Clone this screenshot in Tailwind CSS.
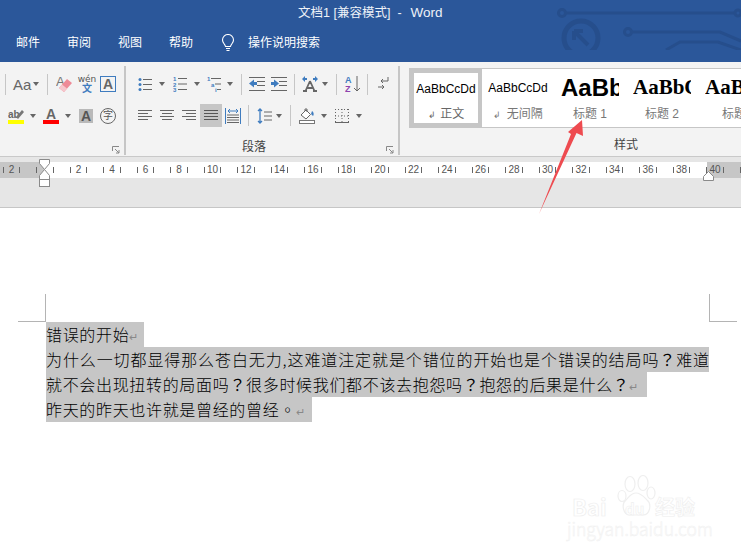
<!DOCTYPE html>
<html>
<head>
<meta charset="utf-8">
<script src="https://cdn.jsdelivr.net/npm/@tailwindcss/browser@4"></script>
</head>
<body class="m-0 bg-white">
<div class="relative w-[741px] h-[556px] overflow-hidden bg-white font-['Liberation_Sans','Noto_Sans_CJK_SC',sans-serif]">

  <!-- title bar + tabs -->
  <div class="relative h-[62px] bg-[#2b579a] text-white">
    <svg class="absolute left-[540px] top-0" width="201" height="50" viewBox="540 0 201 50" fill="none" stroke="#264e8c" stroke-width="3">
      <circle cx="562" cy="13" r="3.5"/><path d="M566 13H734"/><circle cx="738" cy="13" r="3"/>
      <circle cx="581" cy="38" r="17" stroke-width="5"/><path d="M574 31l14 14M574 31h9M574 31v9" stroke-width="4"/>
      <circle cx="628" cy="32" r="3.5"/><path d="M632 32H720L741 41"/><path d="M666 50L680 42H718L741 50"/>
    </svg>
    <div class="relative flex h-[27px] pl-[298px] items-center text-[12.5px] text-[#eef2f8] whitespace-nowrap">
      <span>文档1 [兼容模式]</span><span class="ml-[7px]">-</span><span class="ml-[9px] text-[13.5px]">Word</span>
    </div>
    <div class="relative flex items-center h-[35px] pl-[16px] pb-[3px] text-[12px]">
      <span class="w-[51px]">邮件</span>
      <span class="w-[51px]">审阅</span>
      <span class="w-[51px]">视图</span>
      <span class="w-[52px]">帮助</span>
      <svg width="14" height="18" viewBox="0 0 14 18" fill="none" stroke="#fff" stroke-width="1.1"><path d="M4.5 12.5C4 10 1.5 9 1.5 6a5.5 5.5 0 0 1 11 0c0 3-2.500 4-3 6.500z"/><path d="M5 14.500h4M5.500 16.500h3"/></svg>
      <span class="ml-[13px]">操作说明搜索</span>
    </div>
  </div>

  <!-- ribbon -->
  <div class="flex h-[95px] bg-[#f3f3f3] border-b border-[#c9c9c9] text-[#666]">

    <!-- font group -->
    <div class="relative w-[126px] shrink-0 border-r-2 border-[#c6c6c6] mb-[1px] mt-[4px] pt-[7px]">
      <div class="flex items-center h-[22px]">
        <span class="ml-[5px] w-px h-[21px] bg-[#c6c6c6]"></span>
        <span class="ml-[7px] w-[16px] text-[15px] leading-none text-[#666]">Aa</span>
        <span class="ml-[4px] border-x-[3px] border-t-[4px] border-x-transparent border-t-[#666]"></span>
        <span class="ml-[8px] w-px h-[21px] bg-[#c6c6c6]"></span>
        <svg class="ml-[8px]" width="16" height="18" viewBox="0 0 16 18"><text x="0" y="11" font-size="13" fill="#777" font-family="Liberation Sans">A</text><path d="M3 13l8-9 5 4-8 9z" fill="#ee8a97"/><path d="M3 13l3-3.500 5 4-3 3.500z" fill="#f6c6cc"/></svg>
        <div class="ml-[7px] w-[16px] flex flex-col items-center leading-none">
          <span class="text-[9px] text-[#555] font-['DejaVu_Sans'] leading-[9px]">wén</span>
          <span class="text-[10px] text-[#3f7cbf] font-bold leading-[10px]">文</span>
        </div>
        <span class="ml-[5px] w-[16px] h-[16px] border border-[#3f7cbf] flex items-center justify-center text-[14px] font-bold leading-none text-[#666]">A</span>
      </div>
      <div class="flex items-center h-[23px] mt-[9px]">
        <svg class="ml-[8px]" width="16" height="16" viewBox="0 0 16 16"><text x="0" y="10" font-size="10" fill="#666" font-family="Liberation Sans" font-weight="bold">ab</text><path d="M8 9l6-7 2 2-6 7z" fill="#777"/><rect y="12" width="16" height="4" fill="#ffff00"/></svg>
        <span class="ml-[6px] border-x-[3px] border-t-[4px] border-x-transparent border-t-[#666]"></span>
        <div class="ml-[7px] w-[16px] flex flex-col items-center">
          <span class="text-[14px] leading-[12px] font-bold text-[#666]">A</span>
          <span class="w-[16px] h-[4px] bg-[#ff0000]"></span>
        </div>
        <span class="ml-[6px] border-x-[3px] border-t-[4px] border-x-transparent border-t-[#666]"></span>
        <span class="ml-[8px] w-[14px] h-[14px] bg-[#b9b9b9] flex items-center justify-center text-[14px] font-bold leading-none text-[#555]">A</span>
        <span class="ml-[7px] w-[16px] h-[16px] rounded-full border border-[#666] flex items-center justify-center text-[10px] leading-none text-[#555]">字</span>
      </div>
      <svg class="absolute right-[4px] bottom-[1px]" width="8" height="8" viewBox="0 0 8 8" fill="none" stroke="#888"><path d="M.5 5V.5H7"/><path d="M3 3l4 4M7 4v3H4"/></svg>
    </div>

    <!-- paragraph group -->
    <div class="relative w-[274px] shrink-0 border-r-2 border-[#c6c6c6] mb-[1px] mt-[4px] pt-[7px]">
      <div class="flex items-center h-[22px]">
        <svg class="ml-[12px]" width="14" height="15" viewBox="0 0 14 15" stroke="#666"><path d="M5 2.500h9M5 7.500h9M5 12.500h9"/><circle cx="2" cy="2.500" r="1.500" fill="#3f7cbf" stroke="none"/><circle cx="2" cy="7.500" r="1.500" fill="#3f7cbf" stroke="none"/><circle cx="2" cy="12.500" r="1.500" fill="#3f7cbf" stroke="none"/></svg>
        <span class="ml-[7px] border-x-[3px] border-t-[4px] border-x-transparent border-t-[#666]"></span>
        <svg class="ml-[8px]" width="14" height="16" viewBox="0 0 14 16" stroke="#666"><path d="M5 2.500h9M5 8h9M5 13.500h9"/><g fill="#3f7cbf" stroke="none" font-size="6" font-family="Liberation Sans" font-weight="bold"><text x="0" y="5">1</text><text x="0" y="10.500">2</text><text x="0" y="16">3</text></g></svg>
        <span class="ml-[7px] border-x-[3px] border-t-[4px] border-x-transparent border-t-[#666]"></span>
        <svg class="ml-[7px]" width="15" height="16" viewBox="0 0 15 16" stroke="#666"><path d="M4 2.500h10M8 8h6M10 13.500h4"/><g fill="#3f7cbf" stroke="none" font-size="6" font-family="Liberation Sans" font-weight="bold"><text x="0" y="5">1</text><text x="4" y="10.500">a</text><text x="8" y="16">i</text></g></svg>
        <span class="ml-[5px] border-x-[3px] border-t-[4px] border-x-transparent border-t-[#666]"></span>
        <span class="ml-[8px] w-px h-[21px] bg-[#c6c6c6]"></span>
        <svg class="ml-[7px]" width="16" height="14" viewBox="0 0 16 14" stroke="#666"><path d="M0 .5h16M8 4.500h8M8 8.500h8M0 13.500h16"/><path d="M0 6.500l5-4v2.500h3v3H5v2.500z" fill="#3f7cbf" stroke="none"/></svg>
        <svg class="ml-[6px]" width="16" height="14" viewBox="0 0 16 14" stroke="#666"><path d="M0 .5h16M8 4.500h8M8 8.500h8M0 13.500h16"/><path d="M8 6.500l-5-4v2.500H0v3h3v2.500z" fill="#3f7cbf" stroke="none"/></svg>
        <span class="ml-[7px] w-px h-[21px] bg-[#c6c6c6]"></span>
        <svg class="ml-[7px]" width="16" height="16" viewBox="0 0 16 16"><path d="M8 5L3.500 15M8 5l4.500 10M5 12h6M1 15h4M11 15h4" fill="none" stroke="#666" stroke-width="1.800"/><path d="M0 3l3-3v2h2v2H3v2zM16 3l-3-3v2h-2v2h2v2z" fill="#3f7cbf"/></svg>
        <span class="ml-[4px] border-x-[3px] border-t-[4px] border-x-transparent border-t-[#666]"></span>
        <span class="ml-[8px] w-px h-[21px] bg-[#c6c6c6]"></span>
        <svg class="ml-[8px]" width="16" height="18" viewBox="0 0 16 18"><text x="0" y="8" font-size="9" fill="#3f7cbf" font-family="Liberation Sans" font-weight="bold">A</text><text x="0" y="17" font-size="9" fill="#8e44ad" font-family="Liberation Sans" font-weight="bold">Z</text><path d="M12 1v15M9 13l3 3 3-3" fill="none" stroke="#666"/></svg>
        <span class="ml-[6px] w-px h-[21px] bg-[#c6c6c6]"></span>
        <svg class="ml-[10px]" width="11" height="14" viewBox="0 0 11 14" fill="none" stroke="#666"><path d="M10 0v4H3M5 2L3 4l2 2"/><path d="M0 10h6M4 8l2 2-2 2"/></svg>
      </div>
      <div class="flex items-center h-[23px] mt-[9px]">
        <svg class="ml-[12px]" width="14" height="11" viewBox="0 0 14 11" stroke="#666"><path d="M0 .5h14M0 3.500h10M0 6.500h14M0 9.500h10"/></svg>
        <svg class="ml-[8px]" width="14" height="11" viewBox="0 0 14 11" stroke="#666"><path d="M0 .5h14M2 3.500h10M0 6.500h14M2 9.500h10"/></svg>
        <svg class="ml-[8px]" width="14" height="11" viewBox="0 0 14 11" stroke="#666"><path d="M0 .5h14M4 3.500h10M0 6.500h14M4 9.500h10"/></svg>
        <span class="ml-[4px] w-[22px] h-[23px] bg-[#c6c6c6] flex items-center justify-center">
          <svg width="14" height="11" viewBox="0 0 14 11" stroke="#555"><path d="M0 .5h14M0 3.500h14M0 6.500h14M0 9.500h14"/></svg>
        </span>
        <svg class="ml-[3px]" width="16" height="16" viewBox="0 0 16 16" fill="none"><path d="M.5 0v16M15.500 0v16" stroke="#3f7cbf"/><path d="M3 3h10M3 3l2-2M3 3l2 2M13 3l-2-2M13 3l-2 2" stroke="#3f7cbf"/><path d="M2 7h12M2 9.500h12M2 12h12M2 14.500h12" stroke="#666"/></svg>
        <span class="ml-[7px] w-px h-[21px] bg-[#c6c6c6]"></span>
        <svg class="ml-[8px]" width="15" height="16" viewBox="0 0 15 16" fill="none"><path d="M3 1v14M1 3l2-2 2 2M1 13l2 2 2-2" stroke="#3f7cbf" stroke-width="1.300"/><path d="M7 4h8M7 8h8M7 12h8" stroke="#666"/></svg>
        <span class="ml-[4px] border-x-[3px] border-t-[4px] border-x-transparent border-t-[#666]"></span>
        <span class="ml-[8px] w-px h-[21px] bg-[#c6c6c6]"></span>
        <svg class="ml-[8px]" width="16" height="16" viewBox="0 0 16 16" fill="none"><path d="M2 7l5-5 4.500 4.500-4.500 4.500z" fill="#fff" stroke="#666"/><path d="M6 3V1h2v3" stroke="#666"/><path d="M13 3c2 1 2 4 1 5l-2-2z" fill="#3f7cbf"/><rect x=".5" y="12.500" width="15" height="3" fill="#fff" stroke="#777"/></svg>
        <span class="ml-[6px] border-x-[3px] border-t-[4px] border-x-transparent border-t-[#666]"></span>
        <svg class="ml-[8px]" width="14" height="14" viewBox="0 0 14 14" fill="none" stroke="#666"><path d="M0 .5h14M0 7h14M.5 0v13M7 0v13M13.500 0v13" stroke-dasharray="1 2"/><path d="M0 13.500h14"/></svg>
        <span class="ml-[7px] border-x-[3px] border-t-[4px] border-x-transparent border-t-[#666]"></span>
      </div>
      <div class="absolute left-0 right-0 bottom-[1px] text-center text-[12px] leading-[14px] text-[#444] pr-[16px]">段落</div>
      <svg class="absolute right-[4px] bottom-[1px]" width="8" height="8" viewBox="0 0 8 8" fill="none" stroke="#888"><path d="M.5 5V.5H7"/><path d="M3 3l4 4M7 4v3H4"/></svg>
    </div>

    <!-- styles group -->
    <div class="flex-1 min-w-0 pl-[9px] pt-[6px]">
      <div class="flex h-[60px] w-[332px] bg-white border-y border-l border-[#c6c6c6] overflow-hidden">
        <div class="w-[72px] shrink-0 h-[58px] border-[4px] border-[#c6c6c6] flex flex-col items-center">
          <span class="mt-[5px] h-[22px] leading-[22px] text-[12px] text-black">AaBbCcDd</span>
          <span class="mt-[6px] text-[12px] leading-[16px] text-[#666] whitespace-nowrap"><span class="text-[9px] mr-[1px]">↲</span> 正文</span>
        </div>
        <div class="w-[72px] shrink-0 flex flex-col items-center">
          <span class="mt-[8px] h-[22px] leading-[22px] text-[12px] text-black">AaBbCcDd</span>
          <span class="mt-[7px] text-[12px] leading-[16px] text-[#777] whitespace-nowrap"><span class="text-[9px] mr-[2px]">↲</span> 无间隔</span>
        </div>
        <div class="w-[72px] shrink-0 flex flex-col items-center">
          <span class="mt-[5px] w-[58px] h-[27px] overflow-hidden whitespace-nowrap leading-[27px] text-[24px] font-bold text-black">AaBbCc</span>
          <span class="mt-[5px] text-[12px] leading-[16px] text-[#777]">标题 1</span>
        </div>
        <div class="w-[72px] shrink-0 flex flex-col items-center">
          <span class="mt-[5px] w-[58px] h-[27px] overflow-hidden whitespace-nowrap leading-[27px] text-[21px] font-bold text-black font-['Liberation_Serif']">AaBbCc</span>
          <span class="mt-[5px] text-[12px] leading-[16px] text-[#777] whitespace-nowrap">标题 2</span>
        </div>
        <div class="w-[72px] shrink-0 flex flex-col items-center">
          <span class="mt-[5px] w-[58px] h-[27px] overflow-hidden whitespace-nowrap leading-[27px] text-[21px] font-bold text-black font-['Liberation_Serif']">AaBbCc</span>
          <span class="mt-[5px] w-[58px] pl-[17px] text-[12px] leading-[16px] text-[#777] whitespace-nowrap">标题 3</span>
        </div>
      </div>
      <div class="w-[434px] mt-[10px] text-center text-[12px] leading-[14px] text-[#444]">样式</div>
    </div>
  </div>

  <!-- ruler -->
  <div class="relative h-[51px] bg-[#e6e6e6] border-b border-[#c6c6c6] pt-[5px]">
    <div class="relative h-[16px] bg-white overflow-hidden">
      <div class="absolute left-0 top-0 w-[44px] h-[16px] bg-[#c6c6c6]"></div>
      <div class="absolute left-[707px] right-0 top-0 h-[16px] bg-[#c6c6c6]"></div>
      <div id="ruler" class="relative flex h-[16px] -ml-[9.4px]"></div>
    </div>
    <svg class="absolute left-[38px] top-[2px]" width="13" height="30" viewBox="0 0 13 30" fill="#fff" stroke="#8a8a8a"><path d="M1.500.5h10v4l-5 6-5-6z"/><path d="M6.500 10.500l5 6v4h-10v-4z"/><rect x="1.500" y="20.500" width="10" height="7"/></svg>
    <svg class="absolute left-[703px] top-[14px]" width="12" height="10" viewBox="0 0 12 10" fill="#fff" stroke="#8a8a8a"><path d="M.5 9.500v-4l5-5 5 5v4z"/></svg>
  </div>

  <!-- document page -->
  <div class="relative h-[348px] bg-white pt-[114px] pl-[46px] text-[16px] text-black font-light font-['Noto_Sans_CJK_SC','Liberation_Sans',sans-serif]">
    <span class="absolute left-[45px] top-[86px] w-px h-[28px] bg-[#b4b4b4]"></span>
    <span class="absolute left-[18px] top-[113px] w-[27px] h-px bg-[#b4b4b4]"></span>
    <span class="absolute left-[709px] top-[86px] w-px h-[28px] bg-[#b4b4b4]"></span>
    <span class="absolute left-[709px] top-[113px] w-[28px] h-px bg-[#b4b4b4]"></span>
    <div class="flex flex-col items-start tracking-[0.67px] leading-[25px] whitespace-nowrap">
      <div class="h-[25px] w-[98px] bg-[#c6c6c6]">错误的开始<span class="text-[11px] text-[#888] tracking-normal">↵</span></div>
      <div class="h-[25px] w-[663px] bg-[#c6c6c6] overflow-hidden tracking-[0.9px]">为什么一切都显得那么苍白无力,这难道注定就是个错位的开始也是个错误的结局吗<span class="font-['Noto_Sans_CJK_TC'] font-normal">？</span>难道</div>
      <div class="h-[25px] w-[601px] bg-[#c6c6c6]">就不会出现扭转的局面吗<span class="font-['Noto_Sans_CJK_TC'] font-normal">？</span>很多时候我们都不该去抱怨吗<span class="font-['Noto_Sans_CJK_TC'] font-normal">？</span>抱怨的后果是什么<span class="font-['Noto_Sans_CJK_TC'] font-normal">？</span><span class="text-[11px] text-[#888] tracking-normal">↵</span></div>
      <div class="h-[25px] w-[266px] bg-[#c6c6c6]">昨天的昨天也许就是曾经的曾经<span class="font-['Noto_Sans_CJK_TC']">。</span><span class="text-[11px] text-[#888] tracking-normal">↵</span></div>
    </div>

    <!-- watermark -->
    <div class="absolute left-[570px] top-[264px] w-[135px] h-[72px] text-white">
      <svg class="absolute left-[47px] top-[3px]" width="40" height="44" viewBox="0 0 40 44" fill="#fff" stroke="#efefef" stroke-width="1.200"><ellipse cx="13" cy="9" rx="5" ry="7.500"/><ellipse cx="26" cy="8" rx="5" ry="7.500"/><ellipse cx="5" cy="21" rx="4" ry="5.500"/><ellipse cx="34" cy="18" rx="4" ry="6"/><path d="M19 18c-5 0-7 4-10 7-5 4-3 15 4 15h13c7 0 9-11 4-15-3-3-6-7-11-7z"/></svg>
      <span class="absolute left-[55px] top-[29px] text-[15px] leading-none font-bold text-white [-webkit-text-stroke:0.6px_#eeeeee]">du</span>
      <span class="absolute left-[2px] top-[23px] text-[22px] leading-none font-bold text-white [-webkit-text-stroke:0.7px_#eeeeee]">Bai</span>
      <span class="absolute left-[85px] top-[25px] text-[20px] leading-none font-bold whitespace-nowrap text-white [-webkit-text-stroke:0.6px_#eeeeee]">经验</span>
      <span class="absolute left-[-3px] top-[48px] text-[17.5px] leading-none whitespace-nowrap text-white [-webkit-text-stroke:0.5px_#f0f0f0]">jingyan.baidu.com</span>
    </div>
  </div>

  <!-- red arrow from the annotation -->
  <svg class="absolute left-[530px] top-[115px]" width="60" height="105" viewBox="530 115 60 105"><path d="M539 214L571 134L568 132L582 120L583 136L576.500 133Z" fill="#ee4b50"/></svg>
</div>

<script>
  // ruler cells, half a unit each. k = 0 sits on the left margin
  const ruler = document.getElementById('ruler');
  for (let k = -6; k < 84; k++) {
    const cell = document.createElement('div');
    cell.className = 'w-[8.375px] shrink-0 flex items-center justify-center text-[10px] leading-none text-[#555]';
    if (k % 2 !== 0) {
      cell.innerHTML = '<span class="w-px h-[6px] bg-[#666]"></span>';
    } else if (k % 4 === 0 && k !== 0) {
      cell.innerHTML = '<span class="whitespace-nowrap">' + (Math.abs(k) / 2) + '</span>';
    }
    ruler.appendChild(cell);
  }
</script>
</body>
</html>
